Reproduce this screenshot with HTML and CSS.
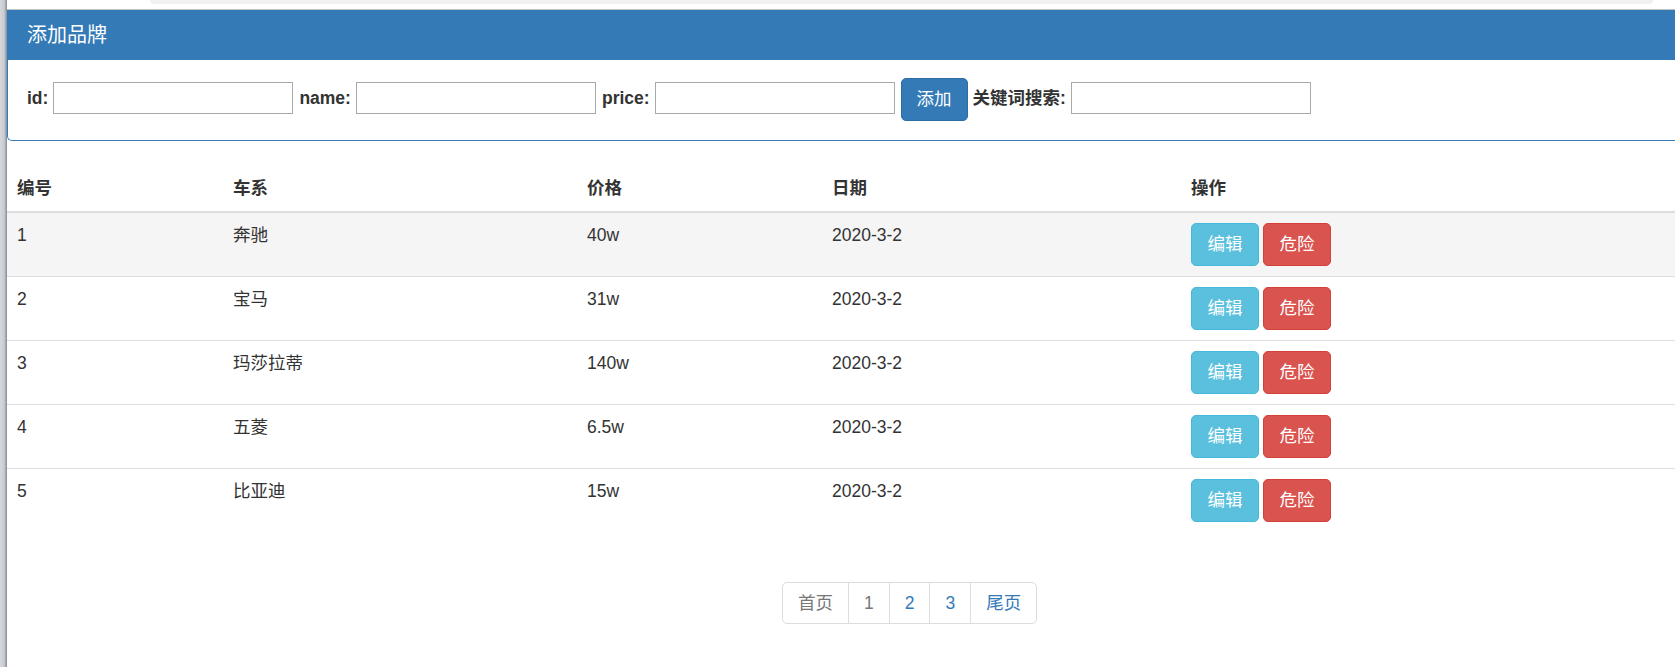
FILE: index.html
```html
<!DOCTYPE html>
<html lang="zh-CN">
<head>
<meta charset="utf-8">
<title>品牌管理</title>
<link rel="stylesheet" href="styles.css">
</head>
<body>
<div class="frame">
  <div class="edge"></div>
  <div class="main">
    <div class="topbar"><div class="tab"></div></div>
    <div class="panel">
      <div class="panel-heading"><h3 class="panel-title">添加品牌</h3></div>
      <div class="panel-body">
        <label class="lbl">id:</label>
        <input class="field" type="text">
        <label class="lbl">name:</label>
        <input class="field" type="text">
        <label class="lbl">price:</label>
        <input class="field" type="text">
        <button class="btn btn-primary btn-add" type="button">添加</button>
        <label class="lbl">关键词搜索:</label>
        <input class="field" type="text">
      </div>
    </div>
    <table class="table">
      <colgroup>
        <col class="c1"><col class="c2"><col class="c3"><col class="c4"><col class="c5">
      </colgroup>
      <thead>
        <tr><th>编号</th><th>车系</th><th>价格</th><th>日期</th><th>操作</th></tr>
      </thead>
      <tbody>
        <tr class="hover">
          <td>1</td><td>奔驰</td><td>40w</td><td>2020-3-2</td>
          <td><div class="actions"><button class="btn btn-info" type="button">编辑</button><button class="btn btn-danger" type="button">危险</button></div></td>
        </tr>
        <tr>
          <td>2</td><td>宝马</td><td>31w</td><td>2020-3-2</td>
          <td><div class="actions"><button class="btn btn-info" type="button">编辑</button><button class="btn btn-danger" type="button">危险</button></div></td>
        </tr>
        <tr>
          <td>3</td><td>玛莎拉蒂</td><td>140w</td><td>2020-3-2</td>
          <td><div class="actions"><button class="btn btn-info" type="button">编辑</button><button class="btn btn-danger" type="button">危险</button></div></td>
        </tr>
        <tr>
          <td>4</td><td>五菱</td><td>6.5w</td><td>2020-3-2</td>
          <td><div class="actions"><button class="btn btn-info" type="button">编辑</button><button class="btn btn-danger" type="button">危险</button></div></td>
        </tr>
        <tr>
          <td>5</td><td>比亚迪</td><td>15w</td><td>2020-3-2</td>
          <td><div class="actions"><button class="btn btn-info" type="button">编辑</button><button class="btn btn-danger" type="button">危险</button></div></td>
        </tr>
      </tbody>
    </table>
    <ul class="pagination">
      <li class="pg muted">首页</li>
      <li class="pg muted">1</li>
      <li class="pg">2</li>
      <li class="pg">3</li>
      <li class="pg">尾页</li>
    </ul>
  </div>
</div>
</body>
</html>
```
FILE: styles.css
```css
* { box-sizing: border-box; }
html, body {
  margin: 0;
  padding: 0;
  background: #fff;
}
body {
  font-family: "Liberation Sans", "Noto Sans CJK SC", sans-serif;
  font-size: 17.5px;
  line-height: 25px;
  color: #333;
}
.frame {
  display: flex;
  height: 667px;
  overflow: hidden;
}
.edge {
  width: 7px;
  flex: 0 0 7px;
  background: linear-gradient(to right, #d6d7db 0%, #c9cbd0 60%, #9aa3b0 85%, #7f8a9a 100%);
}
.main {
  flex: 1;
  min-width: 0;
  overflow: hidden;
}
.topbar {
  height: 10px;
  border-bottom: 1px solid #c4c4c4;
  background: #fff;
}
.tab {
  margin-left: 143px;
  width: 1503px;
  height: 4px;
  background: #f0f1f3;
  border-radius: 0 0 8px 8px;
}
.panel {
  border: 1px solid #337ab7;
  border-right: none;
  border-top: none;
  border-radius: 0 0 0 5px;
  margin-bottom: 25px;
}
.panel-heading {
  background: #337ab7;
  height: 50px;
  padding: 13px 19px 12px;
}
.panel-title {
  margin: 0;
  font-size: 20px;
  font-weight: normal;
  line-height: 25px;
  color: #fff;
}
.panel-body {
  display: flex;
  align-items: center;
  padding: 15px 19px 19px;
}
.lbl {
  font-weight: bold;
  margin-right: 5px;
  line-height: 25px;
}
.field {
  width: 240px;
  height: 32px;
  border: 1px solid #a9a9a9;
  margin: 0 6px 0 0;
  padding: 1px 2px;
  font: inherit;
  background: #fff;
}
.btn {
  font-family: inherit;
  font-size: 17.5px;
  line-height: 25px;
  padding: 8px 15.5px;
  border: 1px solid transparent;
  border-radius: 5px;
  color: #fff;
  margin: 0;
  cursor: pointer;
}
.btn-add {
  padding: 8px 15px;
  margin: 3px 5px 0 0;
}
.btn-primary { background: #337ab7; border-color: #2e6da4; }
.btn-info { background: #5bc0de; border-color: #46b8da; }
.btn-danger { background: #d9534f; border-color: #d43f3a; }

.table {
  width: 100%;
  border-collapse: collapse;
  table-layout: fixed;
  margin: 0;
}
.c1 { width: 216px; }
.c2 { width: 354px; }
.c3 { width: 245px; }
.c4 { width: 359px; }
.table th {
  text-align: left;
  font-weight: bold;
  padding: 10px;
  line-height: 25px;
  border-bottom: 2px solid #ddd;
  vertical-align: bottom;
}
.table td {
  padding: 10px;
  line-height: 25px;
  border-top: 1px solid #ddd;
  vertical-align: top;
}
.table tr.hover td { background: #f5f5f5; }
.actions {
  display: flex;
  gap: 4px;
}
.pagination {
  list-style: none;
  display: flex;
  margin: 50px 0 0 775px;
  padding: 0;
}
.pg {
  padding: 7.5px 15px;
  line-height: 25px;
  border: 1px solid #ddd;
  margin-left: -1px;
  color: #337ab7;
  background: #fff;
}
.pg:first-child {
  margin-left: 0;
  border-radius: 5px 0 0 5px;
}
.pg:last-child {
  border-radius: 0 5px 5px 0;
}
.pg.muted { color: #777; }
```
